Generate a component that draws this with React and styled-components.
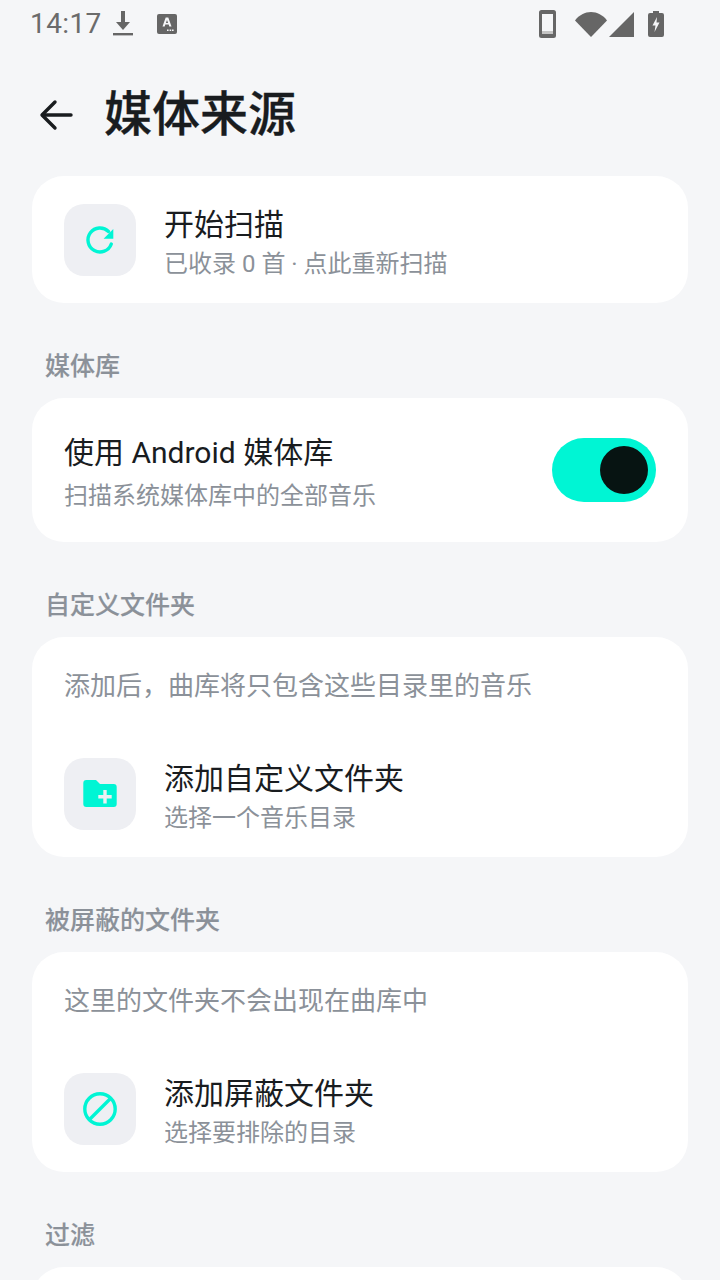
import styled, { createGlobalStyle } from "styled-components";

const GlobalStyle = createGlobalStyle`
  html, body {
    margin: 0;
    padding: 0;
    background: #f5f6f8;
  }
  * {
    box-sizing: border-box;
  }
`;

const Page = styled.div`
  width: 720px;
  height: 1280px;
  overflow: hidden;
  background: #f5f6f8;
  color: #191c1f;
  font-family: Roboto, "Noto Sans CJK SC", sans-serif;
`;

const StatusBar = styled.div`
  height: 48px;
  display: flex;
  align-items: center;
  padding: 0 54px 0 30px;
  color: #666;
`;

const Clock = styled.span`
  font-size: 28px;
  line-height: 48px;
  letter-spacing: 0.4px;
  color: #6b6b6b;
`;

const StatusSpacer = styled.div`
  flex: 1;
`;

const StatusIcon = styled.svg`
  display: block;
  flex: none;
  margin-left: ${(p) => p.$gap || 0}px;
  margin-right: ${(p) => p.$after || 0}px;
  fill: #666;
`;

const Header = styled.header`
  height: 128px;
  display: flex;
  align-items: center;
  padding: 6px 0 0 36px;
`;

const BackButton = styled.svg`
  display: block;
  width: 40px;
  height: 40px;
  margin-right: 28px;
  fill: none;
  stroke: #191c1f;
  stroke-width: 3.4;
  stroke-linecap: round;
  stroke-linejoin: round;
`;

const Title = styled.h1`
  margin: 0;
  font-size: 48px;
  line-height: 64px;
  font-weight: 500;
  -webkit-text-stroke: 0.3px #191c1f;
`;

const Content = styled.main`
  padding: 0 32px;
`;

const Card = styled.section`
  background: #fff;
  border-radius: 32px;
  height: ${(p) => p.$height}px;
  display: flex;
  flex-direction: column;
`;

const SectionLabel = styled.h2`
  margin: 0;
  height: 95px;
  padding: 47px 0 0 13px;
  font-size: 25px;
  line-height: 34px;
  font-weight: 500;
  color: #8b9199;
  -webkit-text-stroke: 0.15px #8b9199;
`;

const Row = styled.div`
  display: flex;
  align-items: center;
  padding: 0 32px;
  height: ${(p) => p.$height}px;
`;

const IconTile = styled.div`
  width: 72px;
  height: 72px;
  flex: none;
  margin-right: 28px;
  border-radius: 20px;
  background: #eeeff3;
  display: flex;
  align-items: center;
  justify-content: center;
`;

const TileIcon = styled.svg`
  display: block;
  width: 48px;
  height: 48px;
  fill: ${(p) => (p.$stroked ? "none" : "#00f5d4")};
  stroke: ${(p) => (p.$stroked ? "#00f5d4" : "none")};
  stroke-width: 3.4;
`;

const RowText = styled.div`
  flex: 1;
  min-width: 0;
  padding-top: 5px;
`;

const RowTitle = styled.div`
  font-size: 30px;
  line-height: 40px;
  color: #191c1f;
`;

const RowSub = styled.div`
  font-size: 24px;
  line-height: 32px;
  margin-top: ${(p) => p.$gap || 0}px;
  color: #8b9199;
`;

const Description = styled.p`
  margin: 0;
  padding: 31px 32px 0;
  height: 121px;
  font-size: 26px;
  line-height: 36px;
  color: #8b9199;
`;

const Switch = styled.div`
  width: 104px;
  height: 64px;
  flex: none;
  border-radius: 32px;
  background: #00f5d4;
  display: flex;
  align-items: center;
  justify-content: flex-end;
  padding-right: 8px;
`;

const SwitchThumb = styled.div`
  width: 48px;
  height: 48px;
  border-radius: 50%;
  background: #071412;
`;

export default function App() {
  return (
    <Page>
      <GlobalStyle />
      <StatusBar>
        <Clock>14:17</Clock>
        <StatusIcon $gap={7} width="28" height="32" viewBox="0 0 28 32">
          <path d="M12 3h4v11h5l-7 8-7-8h5z" />
          <rect x="4" y="25" width="20" height="2.4" />
        </StatusIcon>
        <StatusIcon $gap={19} width="22" height="24" viewBox="0 0 22 24">
          <path d="M3 2h16a2 2 0 0 1 2 2v16a2 2 0 0 1-2 2H3a2 2 0 0 1-2-2V4a2 2 0 0 1 2-2z" />
          <path fill="#f5f6f8" d="M9.700 5.500h2.600l3.200 9h-2.200l-.6-1.900H9.300l-.6 1.900H6.500zm1.300 2.400-1.100 3.200h2.200zM11 17.500h1.600v1.600H11zM13.600 17.500h1.600v1.600h-1.600zM16 17.500h1.600v1.600H16z" />
        </StatusIcon>
        <StatusSpacer />
        <StatusIcon width="17" height="28" viewBox="0 0 17 28">
          <path fillRule="evenodd" d="M2.500 0h12A2.500 2.500 0 0 1 17 2.500v23a2.500 2.500 0 0 1-2.500 2.500h-12A2.500 2.500 0 0 1 0 25.500v-23A2.500 2.500 0 0 1 2.500 0zM3 4v20h11V4z" />
          <rect x="3" y="21" width="11" height="3" fill="#c4c4c4" />
        </StatusIcon>
        <StatusIcon $gap={19} width="32" height="25" viewBox="0 0 32 25">
          <path d="M16 25 0 8.500C4 3 10 0 16 0s12 3 16 8.500z" />
        </StatusIcon>
        <StatusIcon $gap={2} width="25" height="25" viewBox="0 0 25 25">
          <path d="M25 0v25H0z" />
        </StatusIcon>
        <StatusIcon $gap={14} $after={2} width="16" height="26" viewBox="0 0 16 26">
          <path d="M5 0h6v2h3a2 2 0 0 1 2 2v20a2 2 0 0 1-2 2H2a2 2 0 0 1-2-2V4a2 2 0 0 1 2-2h3z" />
          <path fill="#f5f6f8" d="M9 6 4.500 14.500h3L6.500 21l5-9.500H8.500z" />
        </StatusIcon>
      </StatusBar>

      <Header>
        <BackButton viewBox="0 0 40 40">
          <path d="M35 20H7" />
          <path d="M19 7 6 20l13 13" />
        </BackButton>
        <Title>媒体来源</Title>
      </Header>

      <Content>
        <Card $height={127}>
          <Row $height={127}>
            <IconTile>
              <TileIcon viewBox="0 0 48 48" $stroked>
                <path d="M32.500 15.500A12 12 0 1 0 35.300 28" strokeLinecap="round" />
                <path d="M37.300 13v9.700h-9.700z" fill="#00f5d4" stroke="none" />
              </TileIcon>
            </IconTile>
            <RowText>
              <RowTitle>开始扫描</RowTitle>
              <RowSub $gap={3}>已收录 0 首 · 点此重新扫描</RowSub>
            </RowText>
          </Row>
        </Card>

        <SectionLabel>媒体库</SectionLabel>
        <Card $height={144}>
          <Row $height={144}>
            <RowText>
              <RowTitle>使用 Android 媒体库</RowTitle>
              <RowSub $gap={7}>扫描系统媒体库中的全部音乐</RowSub>
            </RowText>
            <Switch>
              <SwitchThumb />
            </Switch>
          </Row>
        </Card>

        <SectionLabel>自定义文件夹</SectionLabel>
        <Card $height={220}>
          <Description>添加后，曲库将只包含这些目录里的音乐</Description>
          <Row $height={72}>
            <IconTile>
              <TileIcon viewBox="0 0 48 48">
                <path d="M10.300 10H20l4 4h13.700a3 3 0 0 1 3 3v17a3 3 0 0 1-3 3H10.300a3 3 0 0 1-3-3V13a3 3 0 0 1 3-3zm17 10v5h-5v3.400h5v5h3.400v-5h5V25h-5v-5z" fillRule="evenodd" />
              </TileIcon>
            </IconTile>
            <RowText>
              <RowTitle>添加自定义文件夹</RowTitle>
              <RowSub $gap={3}>选择一个音乐目录</RowSub>
            </RowText>
          </Row>
        </Card>

        <SectionLabel>被屏蔽的文件夹</SectionLabel>
        <Card $height={220}>
          <Description>这里的文件夹不会出现在曲库中</Description>
          <Row $height={72}>
            <IconTile>
              <TileIcon viewBox="0 0 48 48" $stroked>
                <circle cx="24" cy="24" r="15.200" />
                <path d="M13.500 34.500 34.500 13.500" />
              </TileIcon>
            </IconTile>
            <RowText>
              <RowTitle>添加屏蔽文件夹</RowTitle>
              <RowSub $gap={3}>选择要排除的目录</RowSub>
            </RowText>
          </Row>
        </Card>

        <SectionLabel>过滤</SectionLabel>
        <Card $height={200} />
      </Content>
    </Page>
  );
}
